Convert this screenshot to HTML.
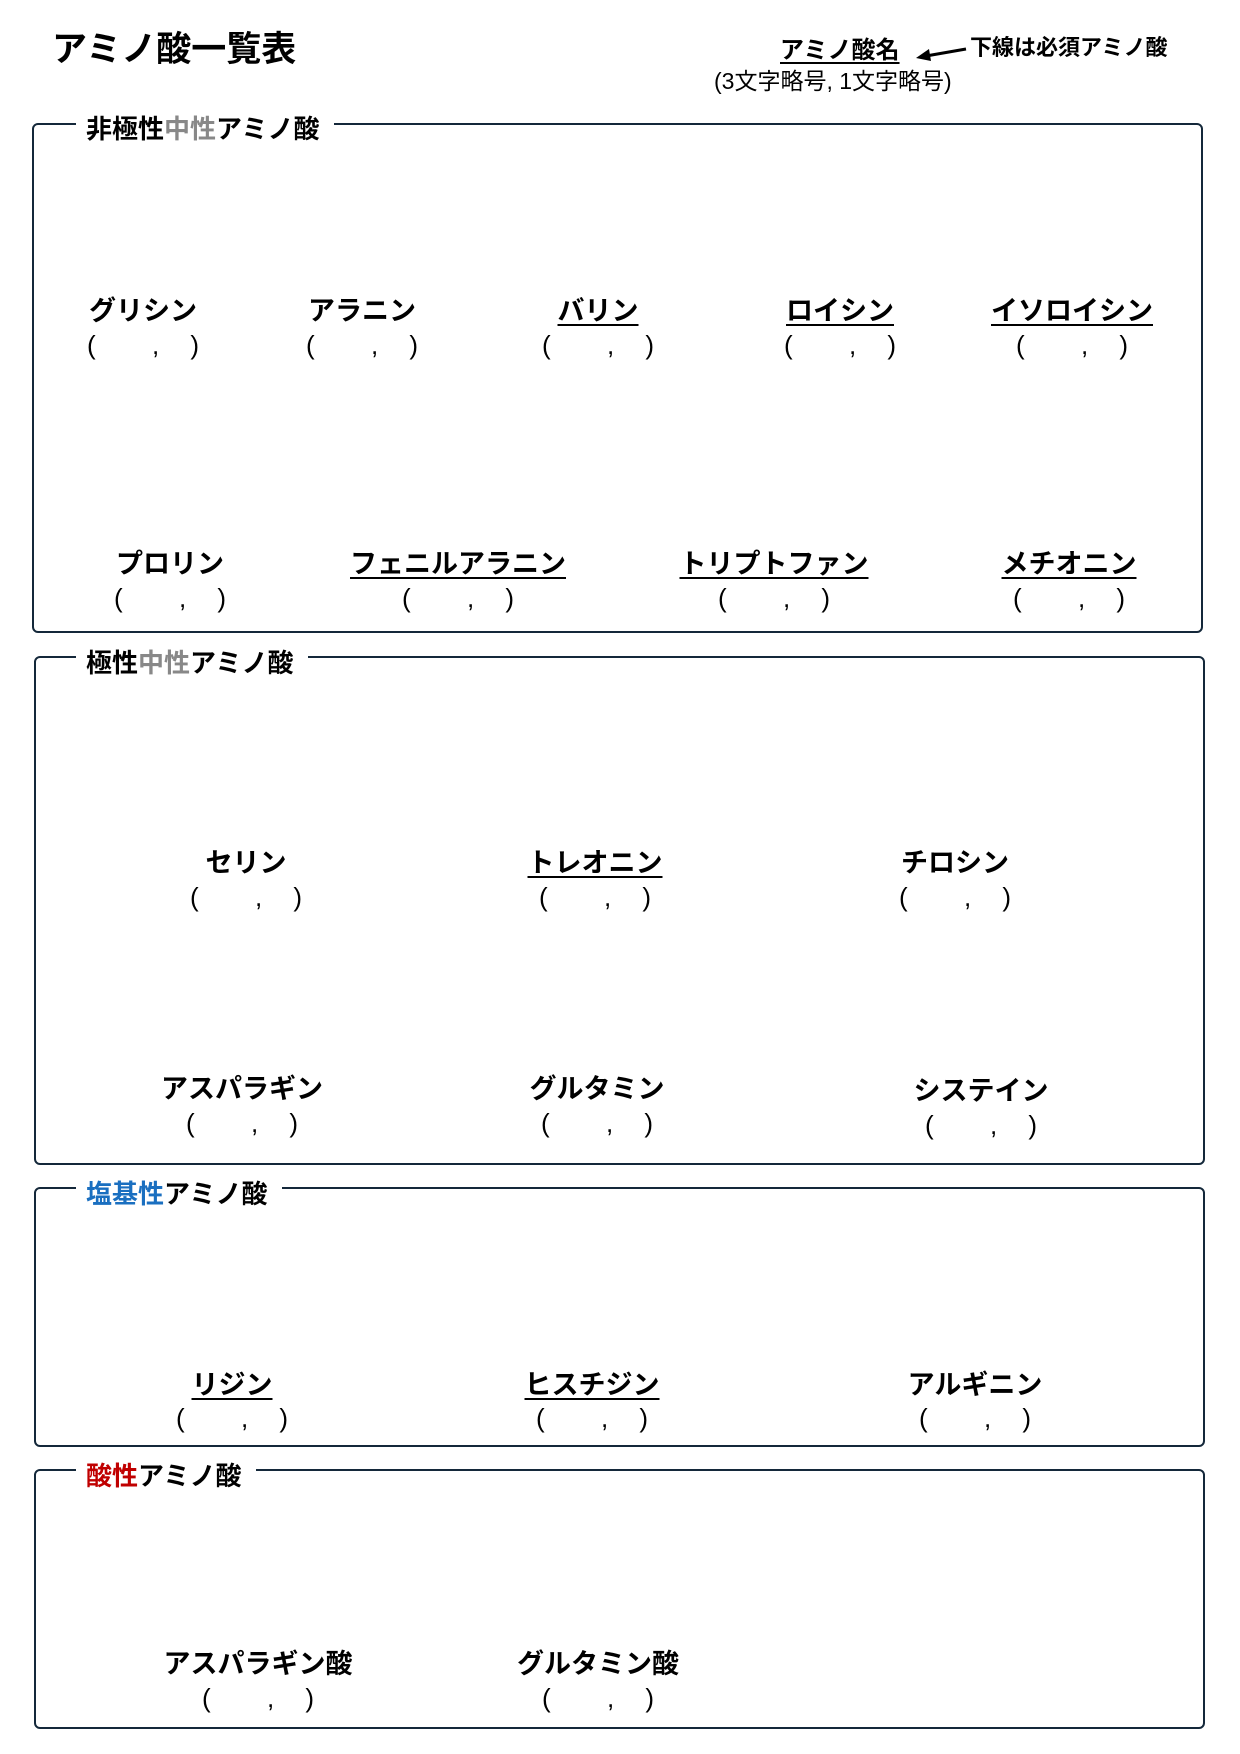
<!DOCTYPE html>
<html><head><meta charset="utf-8"><style>
html,body{margin:0;padding:0;background:#fff;}
body{width:1240px;height:1754px;position:relative;overflow:hidden;font-family:"Liberation Sans","Noto Sans CJK JP",sans-serif;color:#000;}
.a{position:absolute;white-space:nowrap;}
.box{position:absolute;border:2.5px solid #14283a;border-radius:6px;box-sizing:border-box;}
.lbl{position:absolute;background:#fff;font-weight:bold;font-size:26px;padding:0 14px 0 10px;line-height:30px;transform:translateY(-50%);white-space:nowrap;}
.n{position:absolute;font-weight:bold;font-size:27px;transform:translate(-50%,-50%);white-space:nowrap;line-height:30px;margin-top:2px;}
.u{text-decoration:underline;text-decoration-thickness:2px;text-underline-offset:4px;}
.p{position:absolute;font-size:26px;transform:translate(-50%,-50%);width:112px;height:34px;line-height:34px;}
.p span{position:absolute;top:0;}
</style></head><body>
<div class="a" style="left:52px;top:30px;font-size:35px;font-weight:bold;line-height:40px;">アミノ酸一覧表</div>
<div class="a" style="left:780px;top:37px;font-size:24px;font-weight:bold;line-height:28px;" ><span class="u">アミノ酸名</span></div>
<div class="a" style="left:714px;top:67px;font-size:23px;line-height:28px;">(3文字略号, 1文字略号)</div>
<svg class="a" style="left:912px;top:42px" width="56" height="20"><line x1="54" y1="7" x2="14" y2="14" stroke="#000" stroke-width="3"/><polygon points="4,16 17,7 19,19" fill="#000"/></svg>
<div class="a" style="left:970px;top:34px;font-size:22px;font-weight:bold;line-height:28px;">下線は必須アミノ酸</div>

<div class="box" style="left:32px;top:123px;width:1171px;height:510px;"></div>
<div class="lbl" style="left:76px;top:129px;">非極性<span style="color:#888">中性</span>アミノ酸</div>
<div class="box" style="left:34px;top:656px;width:1171px;height:509px;"></div>
<div class="lbl" style="left:76px;top:663px;">極性<span style="color:#888">中性</span>アミノ酸</div>
<div class="box" style="left:34px;top:1187px;width:1171px;height:260px;"></div>
<div class="lbl" style="left:76px;top:1194px;"><span style="color:#1a6fc0">塩基性</span>アミノ酸</div>
<div class="box" style="left:34px;top:1469px;width:1171px;height:260px;"></div>
<div class="lbl" style="left:76px;top:1476px;"><span style="color:#c00000">酸性</span>アミノ酸</div>

<div class="n" style="left:143px;top:309px">グリシン</div>
<div class="n" style="left:362px;top:309px">アラニン</div>
<div class="n u" style="left:598px;top:309px">バリン</div>
<div class="n u" style="left:840px;top:309px">ロイシン</div>
<div class="n u" style="left:1072px;top:309px">イソロイシン</div>
<div class="n" style="left:170px;top:562px">プロリン</div>
<div class="n u" style="left:458px;top:562px">フェニルアラニン</div>
<div class="n u" style="left:774px;top:562px">トリプトファン</div>
<div class="n u" style="left:1069px;top:562px">メチオニン</div>
<div class="n" style="left:246px;top:861px">セリン</div>
<div class="n u" style="left:595px;top:861px">トレオニン</div>
<div class="n" style="left:955px;top:861px">チロシン</div>
<div class="n" style="left:242px;top:1087px">アスパラギン</div>
<div class="n" style="left:597px;top:1087px">グルタミン</div>
<div class="n" style="left:981px;top:1089px">システイン</div>
<div class="n u" style="left:232px;top:1383px">リジン</div>
<div class="n u" style="left:592px;top:1383px">ヒスチジン</div>
<div class="n" style="left:975px;top:1383px">アルギニン</div>
<div class="n" style="left:258px;top:1662px">アスパラギン酸</div>
<div class="n" style="left:598px;top:1662px">グルタミン酸</div>

<div class="p" style="left:143px;top:345px"><span style="left:0">(</span><span style="left:65px">,</span><span style="right:0">)</span></div>
<div class="p" style="left:362px;top:345px"><span style="left:0">(</span><span style="left:65px">,</span><span style="right:0">)</span></div>
<div class="p" style="left:598px;top:345px"><span style="left:0">(</span><span style="left:65px">,</span><span style="right:0">)</span></div>
<div class="p" style="left:840px;top:345px"><span style="left:0">(</span><span style="left:65px">,</span><span style="right:0">)</span></div>
<div class="p" style="left:1072px;top:345px"><span style="left:0">(</span><span style="left:65px">,</span><span style="right:0">)</span></div>
<div class="p" style="left:170px;top:598px"><span style="left:0">(</span><span style="left:65px">,</span><span style="right:0">)</span></div>
<div class="p" style="left:458px;top:598px"><span style="left:0">(</span><span style="left:65px">,</span><span style="right:0">)</span></div>
<div class="p" style="left:774px;top:598px"><span style="left:0">(</span><span style="left:65px">,</span><span style="right:0">)</span></div>
<div class="p" style="left:1069px;top:598px"><span style="left:0">(</span><span style="left:65px">,</span><span style="right:0">)</span></div>
<div class="p" style="left:246px;top:897px"><span style="left:0">(</span><span style="left:65px">,</span><span style="right:0">)</span></div>
<div class="p" style="left:595px;top:897px"><span style="left:0">(</span><span style="left:65px">,</span><span style="right:0">)</span></div>
<div class="p" style="left:955px;top:897px"><span style="left:0">(</span><span style="left:65px">,</span><span style="right:0">)</span></div>
<div class="p" style="left:242px;top:1123px"><span style="left:0">(</span><span style="left:65px">,</span><span style="right:0">)</span></div>
<div class="p" style="left:597px;top:1123px"><span style="left:0">(</span><span style="left:65px">,</span><span style="right:0">)</span></div>
<div class="p" style="left:981px;top:1125px"><span style="left:0">(</span><span style="left:65px">,</span><span style="right:0">)</span></div>
<div class="p" style="left:232px;top:1418px"><span style="left:0">(</span><span style="left:65px">,</span><span style="right:0">)</span></div>
<div class="p" style="left:592px;top:1418px"><span style="left:0">(</span><span style="left:65px">,</span><span style="right:0">)</span></div>
<div class="p" style="left:975px;top:1418px"><span style="left:0">(</span><span style="left:65px">,</span><span style="right:0">)</span></div>
<div class="p" style="left:258px;top:1698px"><span style="left:0">(</span><span style="left:65px">,</span><span style="right:0">)</span></div>
<div class="p" style="left:598px;top:1698px"><span style="left:0">(</span><span style="left:65px">,</span><span style="right:0">)</span></div>
</body></html>
